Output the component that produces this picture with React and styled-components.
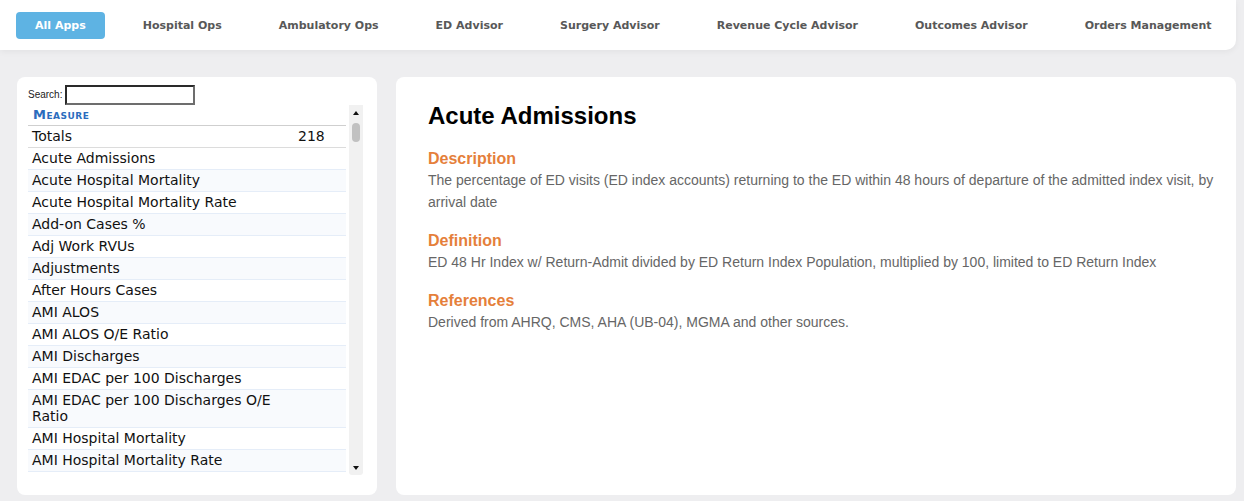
import React from 'react';
import styled, { createGlobalStyle } from 'styled-components';

const GlobalStyle = createGlobalStyle`
  html, body {
    margin: 0;
    padding: 0;
    background: #eeeef0;
    font-family: "Liberation Sans", Arial, sans-serif;
  }
`;

const Page = styled.div`
  width: 1244px;
  height: 501px;
  overflow: hidden;
`;

const Nav = styled.nav`
  width: 1236px;
  height: 50px;
  box-sizing: border-box;
  background: #fff;
  border-radius: 0 0 10px 0;
  box-shadow: 0 2px 6px rgba(0, 0, 0, 0.05);
  display: flex;
  align-items: center;
  gap: 19px;
  padding-left: 16px;
`;

const NavItem = styled.a`
  display: flex;
  align-items: center;
  height: 27px;
  padding: 0 19px;
  border-radius: 4px;
  font-family: "DejaVu Sans", Verdana, sans-serif;
  font-weight: bold;
  font-size: 11px;
  text-decoration: none;
  color: ${p => (p.$active ? '#fff' : '#585858')};
  background: ${p => (p.$active ? '#5eb3e3' : 'transparent')};
  white-space: nowrap;
`;

const Main = styled.main`
  display: flex;
  gap: 19px;
  padding: 27px 8px 0 17px;
`;

const Panel = styled.section`
  background: #fff;
  border-radius: 8px;
  height: 418px;
  box-sizing: border-box;
`;

const ListPanel = styled(Panel)`
  width: 360px;
  flex: none;
  padding: 7px 14px 0 11px;
`;

const SearchRow = styled.label`
  display: flex;
  align-items: center;
  gap: 3px;
  height: 21px;
  font-family: "Liberation Sans", Arial, sans-serif;
  font-size: 10px;
  color: #222;
`;

const SearchInput = styled.input`
  width: 130px;
  height: 20px;
  box-sizing: border-box;
  margin: 0;
  padding: 0 2px;
  border-style: solid;
  border-width: 2px;
  border-color: #2a2a2a #6d6d6d #6d6d6d #2a2a2a;
  outline: none;
`;

const ScrollBox = styled.div`
  display: flex;
  gap: 3px;
  height: 370px;
`;

const Table = styled.div`
  width: 319px;
  height: 100%;
  overflow: hidden;
  font-family: "DejaVu Sans", Verdana, sans-serif;
`;

const HeadRow = styled.div`
  height: 21px;
  box-sizing: border-box;
  border-bottom: 1px solid #cfcfcf;
  padding: 2px 5px 0;
  font-size: 13px;
  font-weight: bold;
  font-variant: small-caps;
  letter-spacing: 0.5px;
  color: #2b6cbd;
  line-height: 16px;
`;

const Row = styled.div`
  display: grid;
  grid-template-columns: 266px 1fr;
  border-bottom: 1px solid ${p => (p.$total ? '#dcdcdc' : '#e5edf8')};
  background: ${p => (p.$alt ? '#f8fafd' : '#fff')};
  font-size: 14px;
  line-height: 16px;
  color: #111;
`;

const Cell = styled.div`
  padding: 2px 4px 3px;
`;

const Scrollbar = styled.div`
  width: 14px;
  flex: none;
  background: #f1f1f1;
  border-radius: 0 0 3px 3px;
  display: flex;
  flex-direction: column;
  align-items: center;
`;

const Arrow = styled.div`
  width: 0;
  height: 0;
  border-left: 3.5px solid transparent;
  border-right: 3.5px solid transparent;
  ${p => (p.$down ? 'border-top: 4px solid #111;' : 'border-bottom: 4px solid #111;')}
  margin: ${p => (p.$down ? 'auto 0 5px' : '6px 0 0')};
`;

const Thumb = styled.div`
  width: 8px;
  height: 19px;
  margin-top: 8px;
  border-radius: 4px;
  background: #c1c1c1;
`;

const DetailPanel = styled(Panel)`
  flex: 1;
  padding: 24px 16px 0 32px;
  color: #666;
`;

const Title = styled.h1`
  margin: 0 0 18px;
  font-size: 24px;
  line-height: 30px;
  font-weight: bold;
  color: #000;
`;

const Section = styled.div`
  margin-bottom: 18px;
`;

const Heading = styled.h2`
  margin: 0;
  font-size: 16px;
  line-height: 20px;
  font-weight: bold;
  color: #e57f3b;
`;

const Text = styled.p`
  margin: 0;
  font-size: 14px;
  line-height: 22px;
  color: #666;
`;

const apps = [
  'All Apps',
  'Hospital Ops',
  'Ambulatory Ops',
  'ED Advisor',
  'Surgery Advisor',
  'Revenue Cycle Advisor',
  'Outcomes Advisor',
  'Orders Management',
];

const measures = [
  'Acute Admissions',
  'Acute Hospital Mortality',
  'Acute Hospital Mortality Rate',
  'Add-on Cases %',
  'Adj Work RVUs',
  'Adjustments',
  'After Hours Cases',
  'AMI ALOS',
  'AMI ALOS O/E Ratio',
  'AMI Discharges',
  'AMI EDAC per 100 Discharges',
  'AMI EDAC per 100 Discharges O/E Ratio',
  'AMI Hospital Mortality',
  'AMI Hospital Mortality Rate',
  'AMI Hospital Mortality Rate O/E Ratio',
  'AMI Inpatient Readmissions',
  'AMI Readmission Rate',
];

const sections = [
  {
    title: 'Description',
    text: 'The percentage of ED visits (ED index accounts) returning to the ED within 48 hours of departure of the admitted index visit, by arrival date',
  },
  {
    title: 'Definition',
    text: 'ED 48 Hr Index w/ Return-Admit divided by ED Return Index Population, multiplied by 100, limited to ED Return Index',
  },
  {
    title: 'References',
    text: 'Derived from AHRQ, CMS, AHA (UB-04), MGMA and other sources.',
  },
];

export default function App() {
  return (
    <Page>
      <GlobalStyle />
      <Nav>
        {apps.map((a, i) => (
          <NavItem key={a} href="#" $active={i === 0}>{a}</NavItem>
        ))}
      </Nav>
      <Main>
        <ListPanel>
          <SearchRow>
            Search:
            <SearchInput type="text" />
          </SearchRow>
          <ScrollBox>
            <Table>
              <HeadRow>Measure</HeadRow>
              <Row $total>
                <Cell>Totals</Cell>
                <Cell>218</Cell>
              </Row>
              {measures.map((m, i) => (
                <Row key={m} $alt={i % 2 === 1}>
                  <Cell>{m}</Cell>
                  <Cell />
                </Row>
              ))}
            </Table>
            <Scrollbar>
              <Arrow />
              <Thumb />
              <Arrow $down />
            </Scrollbar>
          </ScrollBox>
        </ListPanel>
        <DetailPanel>
          <Title>Acute Admissions</Title>
          {sections.map(s => (
            <Section key={s.title}>
              <Heading>{s.title}</Heading>
              <Text>{s.text}</Text>
            </Section>
          ))}
        </DetailPanel>
      </Main>
    </Page>
  );
}
